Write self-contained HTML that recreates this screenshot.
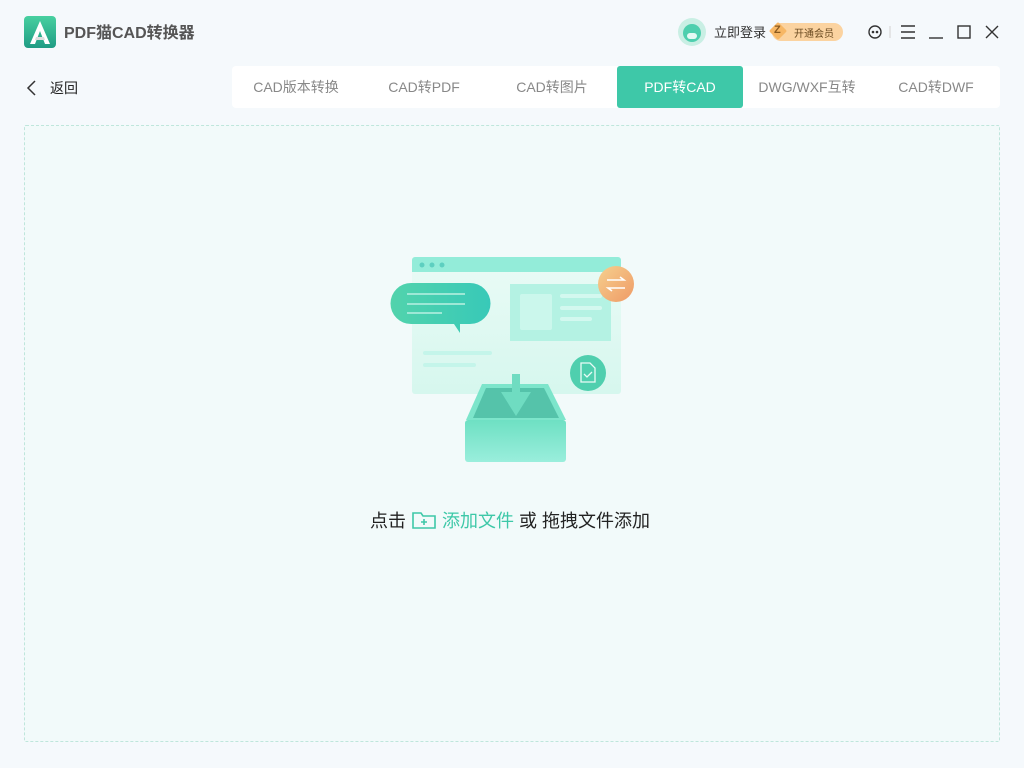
<!DOCTYPE html><html><head><meta charset="utf-8"><style>
body{margin:0;width:1024px;height:768px;background:#f5f9fc;font-family:"Liberation Sans","Noto Sans CJK SC",sans-serif;position:relative;overflow:hidden}
.a{position:absolute}
.tabs{left:232px;top:66px;width:768px;height:42px;background:#fff;border-radius:4px}
.tab{position:absolute;top:0;height:42px;line-height:42px;text-align:center;font-size:14px;color:#888}
.act{background:#3ec8a8;color:#fff;border-radius:3px}
.drop{left:24px;top:125px;width:974px;height:615px;border:1px dashed #bfe6dc;background:#f2fafa;border-radius:2px}
</style></head><body>
<svg class="a" style="left:24px;top:16px" width="32" height="32" viewBox="0 0 32 32"><defs><linearGradient id="lg" x1="0" y1="0" x2="0" y2="1"><stop offset="0" stop-color="#48d0a0"/><stop offset="1" stop-color="#1f9c84"/></linearGradient></defs><rect width="32" height="32" rx="4" fill="url(#lg)"/><path d="M16 5 L26 28 H21 L16 15 L11 28 H6 Z" fill="#fff"/><path d="M12 21 H20 L21 24 H11Z" fill="#ddd"/></svg>
<div class="a" style="left:64px;top:21px;font-size:16px;font-weight:bold;color:#555;transform:translateY(-2px)">PDF猫CAD转换器</div>
<svg class="a" style="left:678px;top:18px" width="28" height="28"><circle cx="14" cy="14" r="14" fill="#c9efe4"/><circle cx="14" cy="15" r="9" fill="#4ecfae"/><rect x="9" y="15" width="10" height="6" rx="3" fill="#e6faf4"/></svg>
<div class="a" style="left:714px;top:22px;font-size:13px;color:#333">立即登录</div>
<div class="a" style="left:772px;top:23px;width:71px;height:18px;background:#fbd3a0;border-radius:9px"></div>
<div class="a" style="left:770px;top:23px;width:16px;height:16px;background:#f7b765;transform:rotate(45deg) scale(.8);border-radius:2px"></div>
<div class="a" style="left:774px;top:24px;font-size:11px;font-weight:bold;color:#8a5a20">Z</div>
<div class="a" style="left:794px;top:25px;font-size:10px;color:#6a4a20">开通会员</div>
<svg class="a" style="left:866px;top:22px" width="140" height="20" fill="none" stroke="#333" stroke-width="1.4"><circle cx="9" cy="10" r="6"/><circle cx="7" cy="10" r=".6" fill="#333"/><circle cx="11" cy="10" r=".6" fill="#333"/><line x1="24" y1="4" x2="24" y2="16" stroke="#ddd"/><path d="M35 4H49M35 10H49M35 16H49"/><path d="M63 16H77"/><rect x="92" y="4" width="12" height="12"/><path d="M120 4L132 16M132 4L120 16"/></svg>
<svg class="a" style="left:26px;top:80px" width="12" height="16" fill="none" stroke="#333" stroke-width="1.5"><path d="M9 1L2 8L9 15"/></svg>
<div class="a" style="left:50px;top:78px;font-size:14px;color:#222">返回</div>
<div class="a tabs">
<div class="tab" style="left:0;width:128px">CAD版本转换</div>
<div class="tab" style="left:128px;width:128px">CAD转PDF</div>
<div class="tab" style="left:256px;width:128px">CAD转图片</div>
<div class="tab act" style="left:385px;width:126px">PDF转CAD</div>
<div class="tab" style="left:511px;width:128px">DWG/WXF互转</div>
<div class="tab" style="left:640px;width:128px">CAD转DWF</div>
</div>
<div class="a drop"></div>
<svg class="a" style="left:380px;top:250px" width="270" height="220"><defs>
<linearGradient id="w" x1="0" y1="0" x2="0" y2="1"><stop offset="0" stop-color="#eafbf6"/><stop offset="1" stop-color="#d6f7ee"/></linearGradient>
<linearGradient id="o" x1="0" y1="0" x2="1" y2="1"><stop offset="0" stop-color="#f6d08e"/><stop offset="1" stop-color="#ef9a66"/></linearGradient>
<linearGradient id="b" x1="0" y1="0" x2="1" y2="0"><stop offset="0" stop-color="#52d3ac"/><stop offset="1" stop-color="#38c9b8"/></linearGradient>
<linearGradient id="bx" x1="0" y1="0" x2="0" y2="1"><stop offset="0" stop-color="#6ee0c3"/><stop offset="1" stop-color="#9aeedc"/></linearGradient></defs>
<rect x="32" y="7" width="209" height="137" rx="3" fill="url(#w)"/>
<path d="M32 22V10a3 3 0 0 1 3-3h203a3 3 0 0 1 3 3v12z" fill="#93ecd9"/>
<circle cx="42" cy="15" r="2.5" fill="#5dcfc0"/><circle cx="52" cy="15" r="2.5" fill="#5dcfc0"/><circle cx="62" cy="15" r="2.5" fill="#5dcfc0"/>
<rect x="130" y="34" width="101" height="57" fill="#b4f2e3"/><rect x="140" y="44" width="32" height="36" rx="2" fill="#cbf7ec"/>
<rect x="180" y="44" width="42" height="4" rx="2" fill="#d3f8ef"/><rect x="180" y="56" width="42" height="4" rx="2" fill="#d3f8ef"/><rect x="180" y="67" width="32" height="4" rx="2" fill="#d3f8ef"/>
<rect x="43" y="101" width="69" height="4" rx="2" fill="#c4f5ea"/><rect x="43" y="113" width="53" height="4" rx="2" fill="#c4f5ea"/>
<path d="M31 33h59a11 11 0 0 1 0 41h-10v9l-6-9h-43a20 20 0 0 1 0-41z" fill="url(#b)"/>
<rect x="27" y="43" width="58" height="2" fill="#9de8d6"/><rect x="27" y="53" width="58" height="2" fill="#9de8d6"/><rect x="27" y="62" width="35" height="2" fill="#9de8d6"/>
<circle cx="236" cy="34" r="18" fill="url(#o)"/><path d="M227 30h17l-4-3M245 38h-17l4 3" stroke="#fff" stroke-width="1.6" fill="none"/>
<circle cx="208" cy="123" r="18" fill="#4fcfae"/><path d="M201 113h9l5 5v14h-14z" stroke="#e9fbf6" stroke-width="1.3" fill="none"/><path d="M204 124l3 3 5-5" stroke="#e9fbf6" stroke-width="1.3" fill="none"/>
<path d="M86 170L102 134h66L186 170z" fill="#7de5cb"/><path d="M93 168L106 138h58L179 168z" fill="#55c3aa"/>
<rect x="85" y="170" width="101" height="42" rx="3" fill="url(#bx)"/>
<path d="M132 124h8v18h11l-15 24-15-24h11z" fill="#6fdcc1"/>
</svg>
<div class="a" style="left:370px;top:507px;font-size:18px;color:#222;white-space:nowrap">点击 <svg width="26" height="20" style="vertical-align:-3px" fill="none" stroke="#3ec8a8" stroke-width="1.6"><path d="M2 3h8l2 3h12v12H2z"/><path d="M13 9v6M10 12h6"/></svg> <span style="color:#3ec8a8">添加文件</span> 或 拖拽文件添加</div>
</body></html>
